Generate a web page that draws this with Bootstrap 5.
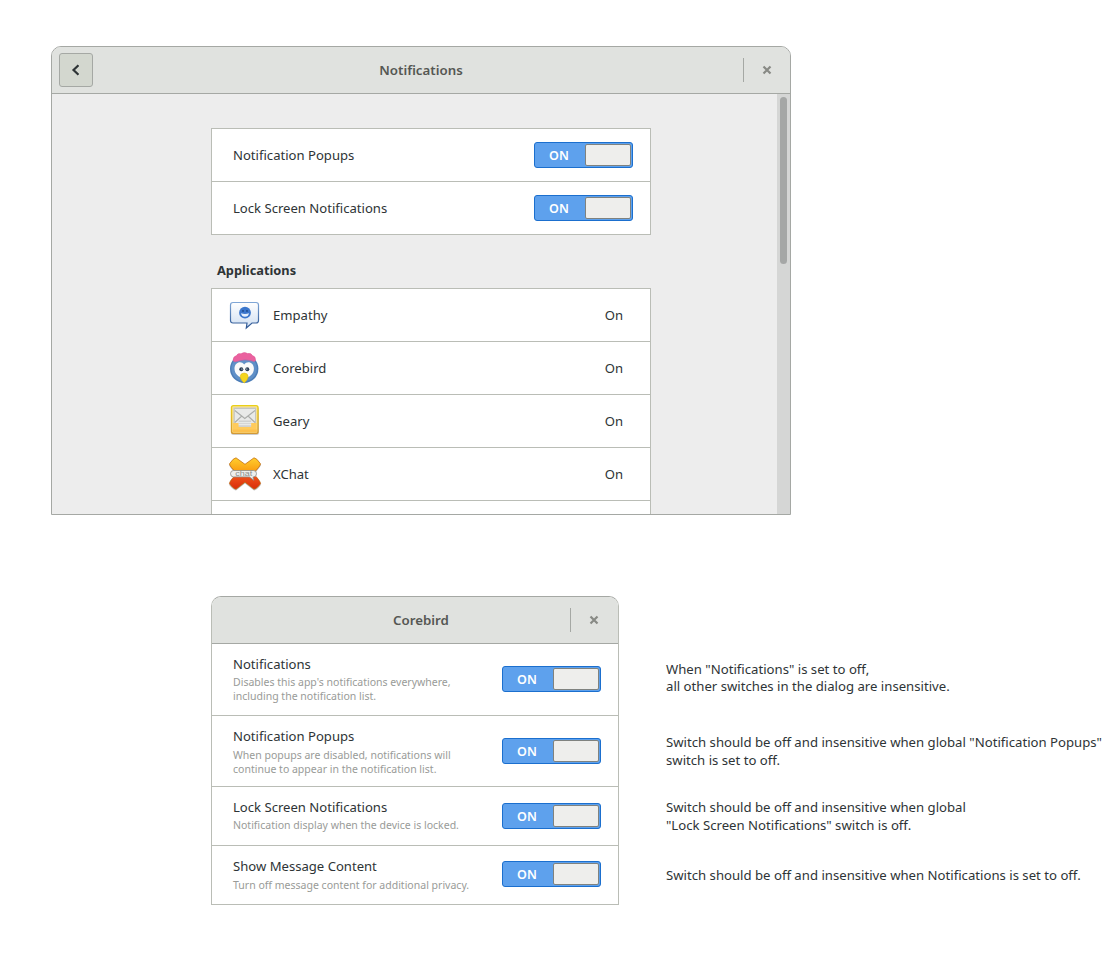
<!DOCTYPE html>
<html lang="en">
<head>
<meta charset="utf-8">
<meta name="viewport" content="width=device-width, initial-scale=1">
<title>Notifications</title>
<link href="https://cdn.jsdelivr.net/npm/bootstrap@5.3.0/dist/css/bootstrap.min.css" rel="stylesheet">
<style>
  body { font: 13.1px/18px "Noto Sans", "Open Sans", sans-serif; color: #2e3436; background: #fff; height: 960px; overflow: hidden; }
  .window { border: 1px solid #a5a8a4; border-radius: 10px 10px 0 0; overflow: hidden; }
  .main-window { width: 740px; height: 469px; margin: 46px 0 0 51px; background: #ededed; }
  .titlebar { display: grid; grid-template-columns: 1fr auto 1fr; height: 47px; flex: none; background: #e0e2df; border-bottom: 1px solid #a5a8a4; }
  .titlebar h1 { font-size: 13.3px; line-height: 18px; font-weight: 600; color: #555753; }
  .dialog .titlebar h1 { padding-left: 12px; }
  .back-btn { width: 34px; height: 34px; margin-left: 7px; background: #d3d7cf; border: 1px solid #a5a8a4; border-radius: 3px; color: #2e3436; }
  .bar-rule { width: 1px; height: 24px; background: #a5a8a4; margin-right: 18px; }
  .close-btn { width: 10px; height: 10px; margin-right: 18px; color: #888a85; }
  .dialog .close-btn { margin-right: 19px; }
  .settings { width: 440px; margin: 34px 0 0 159px; }
  .settings .list-group, .dialog .list-group { --bs-list-group-border-radius: 0; --bs-list-group-border-color: #babdb6; --bs-list-group-color: #2e3436; }
  .settings .list-group-item { height: 54px; padding: 0 17px 0 21px; }
  .settings .list-group-item + .list-group-item { height: 53px; }
  .settings .app-list .list-group-item { padding: 0 27px 0 17px; }
  .settings h2 { font-size: 12.8px; line-height: 18px; font-weight: 700; margin: 26px 0 9px 6px; }
  .app-icon { width: 32px; height: 36px; margin-right: 12px; flex: none; overflow: visible; }
  .scroll-track { width: 13px; background: #d5d6d5; padding: 3px 3px 0 3px; }
  .scroll-thumb { width: 7px; height: 167px; border-radius: 4px; background: #a5a7a6; }
  .on-switch { width: 99px; height: 26px; flex: none; background: #5ea1ed; border: 1px solid #1b6fce; border-radius: 3px; padding: 1px; color: #fff; font-size: 12.5px; font-weight: 600; }
  .on-switch .state { width: 46px; padding-top: 1px; text-align: center; }
  .on-switch .knob { width: 46px; height: 22px; background: #eeeeec; border: 1px solid #7f827f; border-radius: 2px; }
  .lower { margin: 81px 0 0 211px; }
  .dialog { width: 408px; height: 309px; border-color: #a5a8a4 #babdb6 #babdb6; flex: none; }
  .dialog .list-group-item { padding: 0 17px 0 21px; border-color: #babdb6; }
  .dialog .tall { height: 72px; padding-bottom: 1px; }
  .dialog .mid { height: 71px; }
  .dialog .low { height: 59px; }
  .dialog .low .desc { margin-top: 2px; }
  .dialog .low:nth-child(3) > div:first-child { padding-bottom: 1.5px; }
  .dialog .low:last-child { padding-bottom: 3px; }
  .desc { font-size: 10.52px; line-height: 14px; color: #999b98; margin-top: 2px; white-space: nowrap; }
  .dialog .mid .desc, .dialog .low:last-child .desc { margin-top: 3px; }
  .notes { margin: 64.8px 0 0 47px; font-size: 13.17px; line-height: 17.6px; white-space: nowrap; }
  .notes p { margin: 0; }
</style>
</head>
<body>

<main class="window main-window d-flex flex-column">
  <header class="titlebar align-items-center">
    <button class="back-btn btn p-0 d-flex align-items-center justify-content-center" aria-label="Back">
      <svg width="10" height="12" viewBox="0 0 10 12"><path d="M7.500 1.200 2.500 6l5 4.800" fill="none" stroke="currentColor" stroke-width="2.200"/></svg>
    </button>
    <h1 class="m-0">Notifications</h1>
    <div class="d-flex align-items-center justify-content-end">
      <div class="bar-rule"></div>
      <svg class="close-btn" viewBox="0 0 10 10"><path d="M1.500 1.500l7 7m0-7l-7 7" stroke="currentColor" stroke-width="2.200"/></svg>
    </div>
  </header>
  <div class="d-flex flex-grow-1 justify-content-between overflow-hidden">
    <div class="settings">
      <div class="list-group">
        <div class="list-group-item d-flex align-items-center justify-content-between">Notification Popups
          <div class="on-switch d-flex align-items-center justify-content-between"><span class="state">ON</span><span class="knob"></span></div>
        </div>
        <div class="list-group-item d-flex align-items-center justify-content-between">Lock Screen Notifications
          <div class="on-switch d-flex align-items-center justify-content-between"><span class="state">ON</span><span class="knob"></span></div>
        </div>
      </div>
      <h2>Applications</h2>
      <div class="list-group app-list">
        <div class="list-group-item d-flex align-items-center">
          <svg class="app-icon" viewBox="0 0 32 36">
            <defs><linearGradient id="bubble" x2="0" y2="1"><stop stop-color="#fff"/><stop offset="1" stop-color="#cfdff2"/></linearGradient>
            <linearGradient id="rim" x2="0" y2="1"><stop stop-color="#7fa6d6"/><stop offset="1" stop-color="#2a5390"/></linearGradient></defs>
            <path d="M4 5.500h23q2.500 0 2.500 2.500v15.500q0 2.500-2.500 2.500h-4l-5.700 5 .7-5H4q-2.500 0-2.500-2.500V8q0-2.500 2.500-2.500z" fill="url(#bubble)" stroke="url(#rim)" stroke-width="1.200"/>
            <circle cx="16" cy="15.700" r="5.900" fill="#3a76cc"/>
            <circle cx="14" cy="13.900" r=".9" fill="#1c4686"/><circle cx="18" cy="13.900" r=".9" fill="#1c4686"/>
            <path d="M12 16.200q4 1.600 8 0-.7 3.600-4 3.600t-4-3.600z" fill="#e4effc"/>
          </svg>
          <span>Empathy</span><span class="ms-auto">On</span>
        </div>
        <div class="list-group-item d-flex align-items-center">
          <svg class="app-icon" viewBox="0 0 32 36">
            <circle cx="15.200" cy="18.800" r="14.200" fill="#4c7db7"/><circle cx="15.200" cy="18.500" r="12.800" fill="#6090c8"/>
            <path d="M15.200 14.500C12 10 5.500 12.500 5.500 18.500c0 5.500 4 8.500 9.700 10.500 5.700-2 9.700-5 9.700-10.500 0-6-6.500-8.500-9.700-4z" fill="#fafafa"/>
            <path d="M4 10.500Q4 6.500 7.500 5.500 8.500 3 12 3.700 15.500 1.500 18.500 3.500 22 2.700 23.500 5.500 27 6.500 26.500 10.500q-1 1.500-3 .5-7.500-2.500-15 .3Q5 12.500 4 10.500z" fill="#ea619f" stroke="#dc5693" stroke-width=".5"/>
            <circle cx="12.300" cy="19.300" r="2" fill="#263951"/><circle cx="18.300" cy="19.300" r="2" fill="#263951"/>
            <circle cx="12.900" cy="19" r=".6" fill="#fff"/><circle cx="17.800" cy="19" r=".6" fill="#fff"/>
            <path d="M15.200 23q3.800 0 4 3.500c0 2-2.400 5.500-4 6.500-1.600-1-4-4.500-4-6.500q.2-3.500 4-3.500z" fill="#f4d51e" stroke="#d6b515" stroke-width=".5"/>
          </svg>
          <span>Corebird</span><span class="ms-auto">On</span>
        </div>
        <div class="list-group-item d-flex align-items-center">
          <svg class="app-icon" viewBox="0 0 32 36">
            <defs><linearGradient id="tray" x2="0" y2="1"><stop stop-color="#e9cf18"/><stop offset="1" stop-color="#d49a35"/></linearGradient></defs>
            <rect x="2" y="4" width="28" height="28" rx="2.500" fill="#000" opacity=".2"/>
            <rect x="2.500" y="2.600" width="26.500" height="27.800" rx="2" fill="#fbe394" stroke="url(#tray)" stroke-width="1.400"/>
            <path d="M4.500 4.500h22.600V21H4.500z" fill="#c4c6c3"/>
            <path d="M5.800 6h20.200v15H5.800z" fill="#e9eae8"/>
            <path d="M5.800 7.500 15.800 15.500 26 7.500M5.800 19.500l7-6.500M26 19.500 19 13" fill="none" stroke="#abadaa" stroke-width="1.100"/>
            <path d="M3.700 20h6v3.500h12.400V20h5.600v9.300h-24z" fill="#ffcb5c"/>
            <path d="M9.700 17.500h12.400v6.500H9.700z" fill="#d0d1cf"/>
            <path d="M9.700 19.700h12.400M9.700 21.700h12.400" stroke="#eeefed"/>
            <path d="M3.700 26.500h24v2.800h-24z" fill="#fcc04e"/>
          </svg>
          <span>Geary</span><span class="ms-auto">On</span>
        </div>
        <div class="list-group-item d-flex align-items-center">
          <svg class="app-icon" viewBox="0 0 32 36">
            <defs><linearGradient id="cross" x2="0" y2="1"><stop stop-color="#ffcf2e"/><stop offset=".45" stop-color="#f99a10"/><stop offset=".55" stop-color="#f0561c"/><stop offset="1" stop-color="#d92c0a"/></linearGradient></defs>
            <path d="M7 1.800 16 8.300l9-6.500q2.500 0 6.800 6 .2 2.200-7.300 9.700 7.500 7.500 7.300 10.700-3.500 4.800-6.800 5.600L16 26.700l-9 7.100Q4 33 .2 28.200 0 25 7.500 17.500 0 10 .2 7.800 4.500 1.800 7 1.800z" fill="#000" opacity=".25" transform="translate(0 .8)"/>
            <path d="M7 1.800 16 8.300l9-6.500q2.500 0 6.500 6 .2 2.200-7.500 9.700 7.700 7.500 7.500 10.200-3.500 4.800-6.500 5.600L16 26.200l-9 7.100Q4 32.500.5 27.700.3 25 8 17.500.3 10 .5 7.800 4.500 1.800 7 1.800z" fill="url(#cross)" stroke="#bd650c" stroke-width=".7" stroke-linejoin="round"/>
            <path d="M4.500 14.500h20q3 0 3 3.200t-3 3.200h-.5l.8 3.400-4.300-3.400h-16q-3 0-3-3.200t3-3.200z" fill="#eeefec" stroke="#8c8e8b" stroke-width=".8"/>
            <text x="14.800" y="19.900" text-anchor="middle" font-family="Liberation Sans, sans-serif" font-size="6.500" textLength="17" lengthAdjust="spacingAndGlyphs" fill="#8b8d8a">chat</text>
          </svg>
          <span>XChat</span><span class="ms-auto">On</span>
        </div>
        <div class="list-group-item"></div>
      </div>
    </div>
    <div class="scroll-track"><div class="scroll-thumb"></div></div>
  </div>
</main>

<div class="lower d-flex align-items-start">
  <section class="window dialog">
    <header class="titlebar align-items-center">
      <span></span>
      <h1 class="m-0">Corebird</h1>
      <div class="d-flex align-items-center justify-content-end">
        <div class="bar-rule"></div>
        <svg class="close-btn" viewBox="0 0 10 10"><path d="M1.500 1.500l7 7m0-7l-7 7" stroke="currentColor" stroke-width="2.200"/></svg>
      </div>
    </header>
    <div class="list-group list-group-flush">
      <div class="list-group-item tall d-flex align-items-center justify-content-between">
        <div>Notifications<div class="desc">Disables this app's notifications everywhere,<br>including the notification list.</div></div>
        <div class="on-switch d-flex align-items-center justify-content-between"><span class="state">ON</span><span class="knob"></span></div>
      </div>
      <div class="list-group-item mid d-flex align-items-center justify-content-between">
        <div>Notification Popups<div class="desc">When popups are disabled, notifications will<br>continue to appear in the notification list.</div></div>
        <div class="on-switch d-flex align-items-center justify-content-between"><span class="state">ON</span><span class="knob"></span></div>
      </div>
      <div class="list-group-item low d-flex align-items-center justify-content-between">
        <div>Lock Screen Notifications<div class="desc">Notification display when the device is locked.</div></div>
        <div class="on-switch d-flex align-items-center justify-content-between"><span class="state">ON</span><span class="knob"></span></div>
      </div>
      <div class="list-group-item low d-flex align-items-center justify-content-between">
        <div>Show Message Content<div class="desc">Turn off message content for additional privacy.</div></div>
        <div class="on-switch d-flex align-items-center justify-content-between"><span class="state">ON</span><span class="knob"></span></div>
      </div>
    </div>
  </section>
  <aside class="notes">
    <p>When "Notifications" is set to off,<br>all other switches in the dialog are insensitive.</p>
    <p style="margin-top:38.500px">Switch should be off and insensitive when global "Notification Popups"<br>switch is set to off.</p>
    <p style="margin-top:29.700px">Switch should be off and insensitive when global<br>"Lock Screen Notifications" switch is off.</p>
    <p style="margin-top:32px">Switch should be off and insensitive when Notifications is set to off.</p>
  </aside>
</div>

<script src="https://cdn.jsdelivr.net/npm/bootstrap@5.3.0/dist/js/bootstrap.bundle.min.js"></script>
</body>
</html>
